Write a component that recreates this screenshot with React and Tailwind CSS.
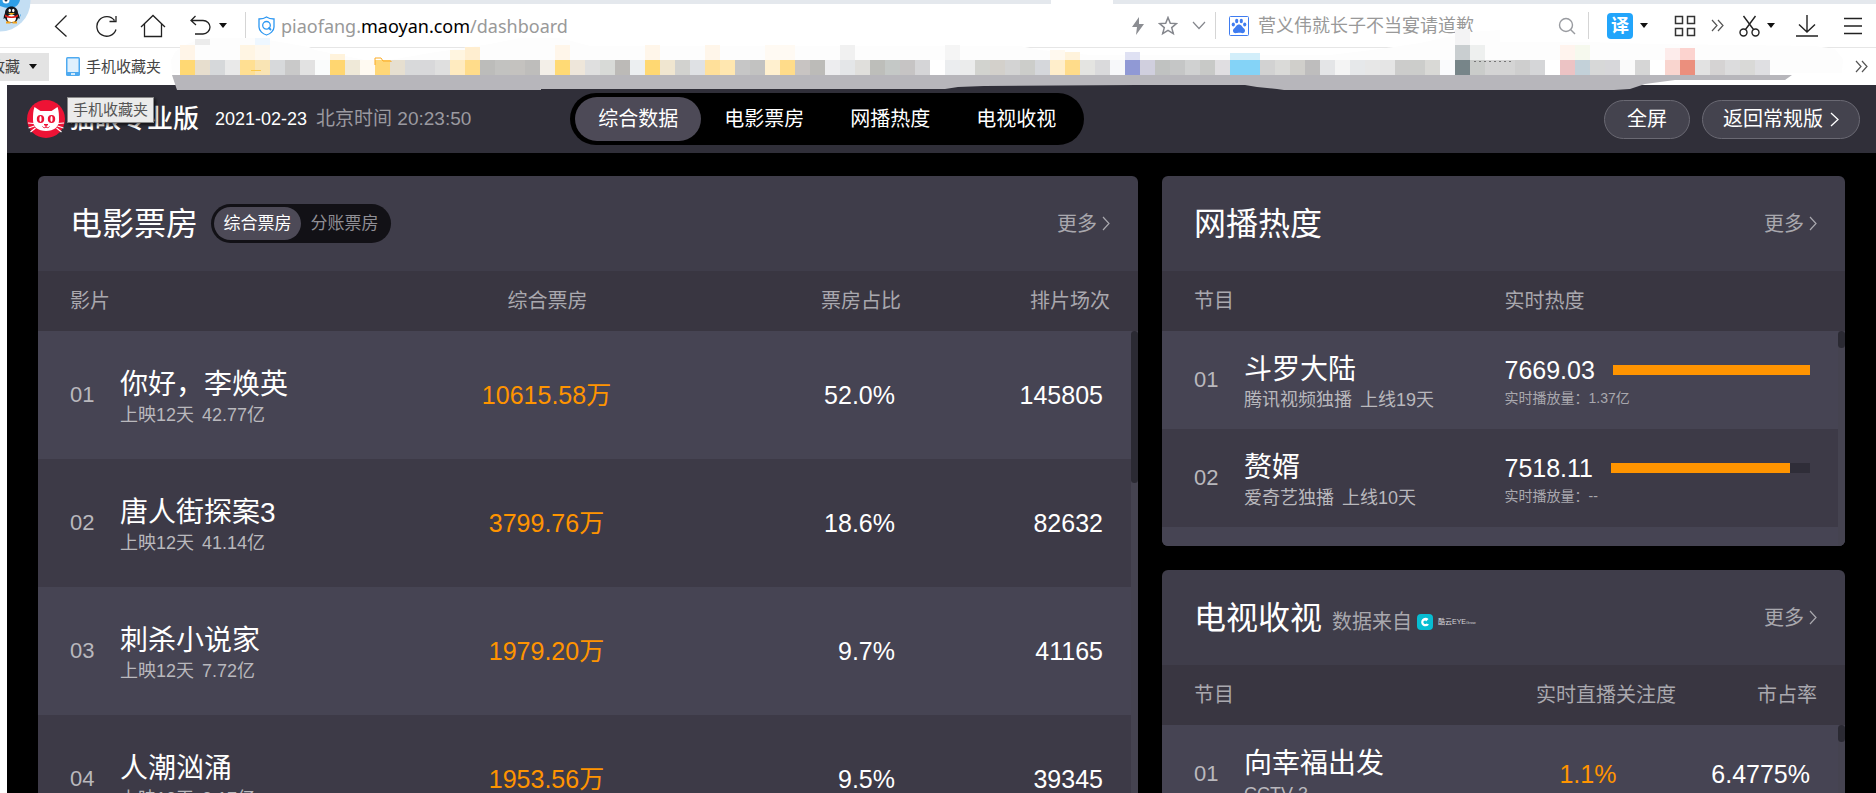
import { useState } from "react";

const films = [
  { rank: "01", name: "你好，李焕英", days: "上映12天", total: "42.77亿", box: "10615.58万", share: "52.0%", shows: "145805" },
  { rank: "02", name: "唐人街探案3", days: "上映12天", total: "41.14亿", box: "3799.76万", share: "18.6%", shows: "82632" },
  { rank: "03", name: "刺杀小说家", days: "上映12天", total: "7.72亿", box: "1979.20万", share: "9.7%", shows: "41165" },
  { rank: "04", name: "人潮汹涌", days: "上映12天", total: "3.17亿", box: "1953.56万", share: "9.5%", shows: "39345" },
];

const webShows = [
  { rank: "01", name: "斗罗大陆", source: "腾讯视频独播", days: "上线19天", heat: "7669.03", plays: "1.37亿", percent: 100 },
  { rank: "02", name: "赘婿", source: "爱奇艺独播", days: "上线10天", heat: "7518.11", plays: "--", percent: 90 },
];

const tvShows = [
  { rank: "01", name: "向幸福出发", channel: "CCTV-3", focus: "1.1%", market: "6.4775%" },
];

// Colours of the blurred bookmarks, one per 15px block
const mosaic =
  "ffd873 e7dece d6d8da e9e9e9 ffdf92 f9e4b4 d7d9db c9c9c9 e2e2e2 fafcfc ffd670 efe9d8 fffaf2 ffd777 e6dfd0 d8d9da d8d8da dfdfdf ffebc0 ffdc8a bcbcba c2c2c0 c4c2bf bebdbb f3efe8 ffda75 eee6da dfdfdf d8dad7 bcbab7 eceff1 ffd872 f0e6d0 d2d2cf dfe1e4 ffe09a ffe7b0 c6c6c6 c2c2c1 fff0cf ffdc8a c8c4c2 bcbbb8 ededef e4e6e8 e0dfdc bdbeba c4c8c6 c6c4c4 d5d5d7 ffffff ebedef ebecec d2d3cf d3d0cb d3d3d3 cccdca d5d7db ffeecb ffdc8a e4e4e1 dadadc f7f8fa 9099d5 d0cfde c0c2c1 c5c6c6 d0d1d1 c8c9c7 e0dee1 84d3f7 84d3f7 d2d2d2 dadad8 d0cfcb bebdbd e4e5e7 f4f4f4 e6e8ea e7e7e7 e5e5e5 cccccb cccdcb d9d9d6 fafbfd 778589 caccca d4d4d4 d4d4d4 cecece d5d6d8 ffffff ecc3c4 c3d1d9 d7d8d8 d7d7da fafafa d6d6d6 ffffff f9d5cf eb8f7d e2e2e2 d5d3d3 dcdcdd d9d9d7 dfdfe2".split(" ");

// [x, y, width, height, colour]
const mosaicTop = [
  [195, 39, 15, 6, "#ececec"], [255, 38, 15, 7, "#eef7ff"],
  [180, 45, 15, 15, "#fff5e8"], [240, 45, 15, 15, "#fff5e3"], [255, 45, 15, 15, "#fef8ee"],
  [330, 54, 15, 6, "#fff3dc"], [450, 50, 15, 10, "#fff5e0"], [465, 47, 15, 13, "#ffeed0"],
  [555, 45, 15, 15, "#fff6ea"], [645, 45, 15, 15, "#fff6ea"], [705, 45, 15, 15, "#fff6ea"],
  [765, 45, 30, 15, "#fffaf3"], [840, 45, 15, 15, "#f1f1f1"], [945, 45, 15, 15, "#f5f5f5"],
  [1050, 50, 15, 10, "#fff9ef"], [1065, 52, 15, 8, "#fff3dc"], [1125, 52, 15, 8, "#dfe1f3"],
  [1230, 53, 30, 7, "#d2eefa"], [1455, 29, 15, 16, "#f3f3f4"], [1455, 45, 15, 15, "#c9ced0"],
  [1470, 45, 15, 15, "#eef0ef"], [1560, 45, 15, 15, "#fff4ee"], [1575, 45, 15, 15, "#f6f9ee"],
  [1665, 48, 15, 12, "#fdeceb"], [1680, 48, 15, 12, "#fcd3cf"],
];

function Mosaic() {
  return (
    <svg className="pointer-events-none absolute left-0 top-0 z-10" width="1876" height="92" viewBox="0 0 1876 92" aria-hidden="true">
      <path d="M171 60l4-8 8-6 14-6 12-2h45l20 3 35 6 6 3 30 6 20 4h25l40-7 60-9 30-6h40l30 8h430l20 4 50 5h240l50-6 40-6 50-11 30-2v12h90l60 2 165 2 20 3 8 10-1 14H172z" fill="#fdfdfd" />
      {mosaicTop.map(([x, y, w, h, fill]) => (
        <rect key={`${x}-${y}`} x={x} y={y} width={w} height={h} fill={fill} />
      ))}
      {mosaic.map((c, i) => (
        <rect key={i} x={180 + i * 15} y="60" width="15" height="15" fill={`#${c}`} shapeRendering="crispEdges" />
      ))}
      <path d="M375 65v-7h6l2 3h8v1" fill="none" stroke="#fbab25" />
      <path d="M251 70.5h10" stroke="#fcc84a" />
      <path d="M1474 61.5h38" stroke="#777" strokeDasharray="2 3" />
      <path d="M172 75l5 15h364v-1h404l13-2 26-1 152-1h109l12 2 20 2 7 1h330l16-1 15-5 30-4h110l7-5z" fill="#b7b6bb" />
    </svg>
  );
}

function Caret() {
  return (
    <svg className="shrink-0" width="8" height="5" viewBox="0 0 8 5" aria-hidden="true">
      <path d="M0 0h8L4 5z" fill="#111" />
    </svg>
  );
}

function DoubleChevron() {
  return (
    <svg width="13" height="13" viewBox="0 0 13 13" fill="none" stroke="#555" strokeWidth="1.2" aria-hidden="true">
      <path d="M1 1l5 5.500L1 12M7 1l5 5.500L7 12" />
    </svg>
  );
}

function Avatar() {
  return (
    <svg className="absolute left-0 top-0 z-20" width="32" height="32" viewBox="0 0 32 32" aria-hidden="true">
      <circle cx="0" cy="1" r="30.500" fill="#c3def3" />
      <path d="M0 0h20c-1 5-5 8-10 8-4 0-7-1-10-2z" fill="#2f9fe6" />
      <circle cx="6" cy="0" r="3.500" fill="#fff" />
      <circle cx="6" cy="0" r="1.500" fill="#16324a" />
      <path d="M20 15l1-1-.5 3z" fill="#3f9fe0" />
      <ellipse cx="11.500" cy="17.500" rx="6.500" ry="5.500" fill="#f8f8f8" />
      <path d="M5 13c0-4 3-6.500 6.500-6.500S18 9 18 13c1 2 2 4 1.500 6l-1.500-1c-.5 3-3 5-6.500 5S6 21 5 18l-1.500 1c0-2 .5-4 1.500-6z" fill="#15171b" />
      <ellipse cx="11.500" cy="18.500" rx="4.500" ry="4" fill="#fff" />
      <ellipse cx="9.700" cy="10.500" rx="1.200" ry="1.700" fill="#fff" />
      <ellipse cx="13.300" cy="10.500" rx="1.200" ry="1.700" fill="#fff" />
      <path d="M8 13h7l-3.500 2z" fill="#f6b21b" />
      <path d="M5 14.500c4 2.500 9 2.500 13 0v2c-4 2-9 2-13 0z" fill="#e0201b" />
      <path d="M6 22.500h4.500M12.500 22.500H17" stroke="#f6a41b" strokeWidth="1.800" />
    </svg>
  );
}

function Toolbar() {
  return (
    <div className="flex h-11 items-center border-b border-[#e6e6e6] bg-white pl-[54px] pr-[14px]">
      <button type="button" aria-label="后退">
        <svg width="14" height="24" viewBox="0 0 14 24" fill="none" stroke="#222" strokeWidth="1.300"><path d="M12.500 1.500L1.500 12.500l11 10" /></svg>
      </button>
      <button type="button" aria-label="刷新" className="ml-7">
        <svg width="22" height="24" viewBox="0 0 22 24" fill="none" stroke="#222" strokeWidth="1.300"><path d="M20 15.500A9.800 9.800 0 1 1 18.500 6.500M13.500 7.500h6.500V2" /></svg>
      </button>
      <button type="button" aria-label="主页" className="ml-[22px]">
        <svg width="26" height="24" viewBox="0 0 26 24" fill="none" stroke="#222" strokeWidth="1.300"><path d="M1 13L13 1.500 25 13M4.500 10v12.500h17V10" /></svg>
      </button>
      <button type="button" aria-label="恢复" className="ml-6 flex items-center gap-2">
        <svg width="21" height="22" viewBox="0 0 21 22" fill="none" stroke="#222" strokeWidth="1.300"><path d="M5.500 1L1 5.500l5 4.500M1 5.500h12c4 0 7 3 7 6.500s-3 7-7 7H5" /></svg>
        <Caret />
      </button>
      <span className="ml-[18px] h-[27px] w-px bg-[#d5d5d5]" />
      <svg className="ml-3 shrink-0" width="17" height="20" viewBox="0 0 17 20" fill="none" stroke="#2c97f2" strokeWidth="1.300" aria-hidden="true">
        <path d="M8.500 1C6 2.800 3.500 3 1 3v8c0 4 4 7 7.500 8 3.500-1 7.500-4 7.500-8V3c-2.500 0-5-.2-7.500-2z" />
        <circle cx="8.500" cy="9.300" r="3.800" />
        <path d="M10.500 11.500l2.500 2.500" strokeWidth="1.800" />
      </svg>
      <div role="textbox" aria-label="地址" contentEditable suppressContentEditableWarning className="ml-[6px] flex-1 font-['Noto_Sans'] text-[18px] leading-7 text-[#999] outline-none">
        piaofang.<span className="text-black">maoyan.com</span>/dashboard
      </div>
      <button type="button" aria-label="极速模式">
        <svg width="12" height="18" viewBox="0 0 12 18"><path d="M7 0L0 10h5L4 18l8-11H7z" fill="#8b8d92" /></svg>
      </button>
      <button type="button" aria-label="收藏网页" className="ml-[14px]">
        <svg width="20" height="20" viewBox="0 0 20 20" fill="none" stroke="#85878d" strokeWidth="1.500"><path d="M10 1.500l2.300 5.700 6.200.4-4.800 4 1.600 6L10 14.300l-5.300 3.300 1.600-6-4.800-4 6.200-.4z" /></svg>
      </button>
      <button type="button" aria-label="展开地址栏" className="ml-[14px]">
        <svg width="14" height="9" viewBox="0 0 14 9" fill="none" stroke="#85878d" strokeWidth="1.200"><path d="M1 1l6 6.500L13 1" /></svg>
      </button>
      <span className="ml-[9px] h-[27px] w-px bg-[#d5d5d5]" />
      <svg className="ml-[13px] shrink-0" width="20" height="20" viewBox="0 0 20 20" aria-hidden="true">
        <rect x=".5" y=".5" width="19" height="19" rx="1" fill="#fff" stroke="#3f7cf0" />
        <g fill="#3f7cf0">
          <ellipse cx="4.300" cy="8.500" rx="1.600" ry="2.100" />
          <ellipse cx="7.700" cy="5" rx="1.600" ry="2.200" />
          <ellipse cx="12.300" cy="5" rx="1.600" ry="2.200" />
          <ellipse cx="15.700" cy="8.500" rx="1.600" ry="2.100" />
          <path d="M10 8.500c2.500 0 3 2.500 5 4 2 2 .8 4.700-1.500 4.700-1.300 0-2-.4-3.500-.4s-2.200.4-3.500.4C4.200 17.200 3 14.500 5 12.500c2-1.500 2.500-4 5-4z" />
        </g>
      </svg>
      <input type="text" aria-label="搜索" defaultValue="菅义伟就长子不当宴请道歉" className="ml-[9px] w-[300px] text-[18px] leading-7 text-[#999] outline-none" />
      <button type="button" aria-label="搜索按钮">
        <svg width="18" height="18" viewBox="0 0 18 18" fill="none" stroke="#999ba0" strokeWidth="1.400"><circle cx="8" cy="8" r="6.500" /><path d="M12.500 12.500L17 17" /></svg>
      </button>
      <span className="ml-3 h-[27px] w-px bg-[#d5d5d5]" />
      <button type="button" aria-label="翻译" className="ml-[18px] flex items-center gap-[7px]">
        <span className="flex size-[26px] items-center justify-center rounded-sm bg-[#22a5fb] text-[18px] font-bold leading-6 text-white">译</span>
        <Caret />
      </button>
      <button type="button" aria-label="应用" className="ml-[26px]">
        <svg width="22" height="22" viewBox="0 0 22 22" fill="none" stroke="#333" strokeWidth="1.500"><path d="M1.500 1.500h7v7h-7zM13.500 1.500h7v7h-7zM1.500 13.500h7v7h-7zM13.500 13.500h7v7h-7z" /></svg>
      </button>
      <button type="button" aria-label="更多扩展" className="ml-[15px]"><DoubleChevron /></button>
      <button type="button" aria-label="截图" className="ml-[15px] flex items-center gap-[7px]">
        <svg width="21" height="22" viewBox="0 0 21 22" fill="none" stroke="#222" strokeWidth="1.400"><circle cx="4.500" cy="17.500" r="3.500" /><circle cx="16.500" cy="17.500" r="3.500" /><path d="M4.500 1L14.500 14.500M16.500 1L6.500 14.500" /></svg>
        <Caret />
      </button>
      <button type="button" aria-label="下载" className="ml-[20px]">
        <svg width="24" height="22" viewBox="0 0 24 22" fill="none" stroke="#222" strokeWidth="1.400"><path d="M12 0v17M4 9.500l8 7.500 8-7.500M1 21h22" /></svg>
      </button>
      <button type="button" aria-label="菜单" className="ml-[25px]">
        <svg width="18" height="18" viewBox="0 0 18 18" stroke="#222" strokeWidth="1.500"><path d="M0 1.500h18M0 9h18M0 16.500h18" /></svg>
      </button>
    </div>
  );
}

function Bookmarks() {
  return (
    <div className="flex h-[37px] items-center bg-white pr-2 text-[15px] leading-6 text-[#444]">
      <button type="button" className="flex h-7 w-[49px] items-center justify-end gap-[9px] overflow-hidden bg-[#e3e3e3] pr-3">
        <span className="shrink-0">收藏</span>
        <Caret />
      </button>
      <a href="#mobile" className="ml-[17px] flex items-center gap-[6px]">
        <svg width="14" height="19" viewBox="0 0 14 19" aria-hidden="true">
          <rect width="14" height="19" rx="1.500" fill="#4eaaf0" />
          <rect x="1.500" y="1.500" width="11" height="13.500" fill="#dff0fd" />
          <path d="M5 17h4" stroke="#fff" strokeWidth="1.500" />
        </svg>
        手机收藏夹
      </a>
      <button type="button" aria-label="更多书签" className="ml-auto"><DoubleChevron /></button>
    </div>
  );
}

function MaoyanLogo() {
  return (
    <svg width="38" height="38" viewBox="0 0 38 38" aria-hidden="true">
      <circle cx="19" cy="19" r="19" fill="#ee1335" />
      <path d="M7.500 7l6 4h11l6-4c1.500 4 1.500 8 1.500 13 0 7-5 11-13 11S6 27 6 20c0-5 0-9 1.500-13z" fill="#fff" />
      <ellipse cx="13.500" cy="19" rx="3.700" ry="4" fill="#ee1335" />
      <ellipse cx="24.500" cy="19" rx="3.700" ry="4" fill="#ee1335" />
      <ellipse cx="13.500" cy="19" rx="1.100" ry="3" fill="#fff" />
      <ellipse cx="24.500" cy="19" rx="1.100" ry="3" fill="#fff" />
      <path d="M17 24.500h4l-2 1.500zM19 26v1.500M15.500 26.500c1 1.500 2.500 1.500 3.500.5 1 1 2.500 1 3.500-.5" fill="none" stroke="#ee1335" />
      <path d="M1 23l6 .5M1.500 28l6-2M3.500 32l5-4M37 23l-6 .5M36.500 28l-6-2M34.500 32l-5-4" stroke="#fff" strokeWidth="1.200" />
    </svg>
  );
}

function PageHeader() {
  const [active, setActive] = useState("综合数据");
  return (
    <header className="flex h-[68px] items-center bg-[#302f39] pl-5 pr-4 text-white">
      <div className="relative flex items-center gap-1">
        <MaoyanLogo />
        <span className="text-[26px] font-medium leading-8">猫眼专业版</span>
        <span role="tooltip" className="absolute -top-[3px] left-10 whitespace-nowrap border border-[#888] bg-[#ebebeb] px-[5px] text-[15px] leading-6 text-[#555] shadow-[2px_2px_3px_rgba(0,0,0,0.6)]">
          手机收藏夹
        </span>
      </div>
      <time className="ml-4 whitespace-nowrap text-[18px] leading-7">2021-02-23</time>
      <span className="ml-[9px] whitespace-nowrap text-[19px] leading-7 text-[#9b9aa0]">北京时间 20:23:50</span>
      <nav className="ml-[99px] flex shrink-0 rounded-full bg-black px-[5px] py-1">
        {["综合数据", "电影票房", "网播热度", "电视收视"].map((item) => (
          <button
            key={item}
            type="button"
            onClick={() => setActive(item)}
            className={`h-11 w-[126px] rounded-full text-[20px] leading-7 ${active === item ? "bg-[#4d4a57]" : ""}`}
          >
            {item}
          </button>
        ))}
      </nav>
      <button type="button" className="ml-auto h-[39px] w-[86px] shrink-0 rounded-full border border-[#6a6973] bg-[#44434e] text-[20px] leading-7">全屏</button>
      <button type="button" className="ml-3 flex h-[39px] w-[158px] shrink-0 items-center justify-center gap-[7px] rounded-full border border-[#6a6973] bg-[#44434e] text-[20px] leading-7">
        返回常规版
        <svg width="9" height="15" viewBox="0 0 9 15" fill="none" stroke="#fff" strokeWidth="1.300" aria-hidden="true"><path d="M1 1l7 6.500L1 14" /></svg>
      </button>
    </header>
  );
}

function PanelHeader({ title, children }) {
  return (
    <div className="flex h-[95px] items-center pl-8 pr-7">
      <h2 className="text-[32px] leading-10 text-white">{title}</h2>
      {children}
      <a href="#more" className="ml-auto flex items-center gap-[5px] text-[20px] leading-7 text-[#a9a8ae]">
        更多
        <svg width="8" height="15" viewBox="0 0 8 15" fill="none" stroke="#a9a8ae" strokeWidth="1.200" aria-hidden="true"><path d="M1 1l6 6.500L1 14" /></svg>
      </a>
    </div>
  );
}

function Panel({ children }) {
  return <section className="overflow-hidden rounded-md bg-[#3f3d4a]">{children}</section>;
}

function Scrollbar({ thumb }) {
  return (
    <div className="absolute bottom-0 right-0 top-[60px] w-[7px] bg-[#454350]">
      <div className={`rounded-full bg-[#2b2a33] ${thumb}`} />
    </div>
  );
}

function NameCell({ rank, name, info }) {
  return (
    <td className="pl-8">
      <div className="flex items-center">
        <span className="w-[50px] shrink-0 text-[22px] leading-7 text-[#b9b8bd]">{rank}</span>
        <div className="pt-1">
          <div className="text-[28px] leading-9 text-white">{name}</div>
          <div className="flex gap-2 text-[18px] leading-6 text-[#b9b8bd]">
            {info.map((text) => <span key={text}>{text}</span>)}
          </div>
        </div>
      </div>
    </td>
  );
}

const tableClass = "w-full table-fixed border-collapse";
const headRow = "h-[60px] bg-[#393641] text-[20px] leading-7 text-[#a9a8ae]";
const stripe = "odd:bg-[#464453] even:bg-[#3d3a47]";

function BoxOffice() {
  const [mode, setMode] = useState("综合票房");
  return (
    <Panel>
      <PanelHeader title="电影票房">
        <div className="ml-[13px] flex rounded-full bg-[#121116] p-[3px]">
          {["综合票房", "分账票房"].map((item) => (
            <button
              key={item}
              type="button"
              onClick={() => setMode(item)}
              className={`h-[33px] w-[87px] rounded-full text-[17px] leading-6 ${mode === item ? "bg-[#4d4a57] text-white" : "text-[#8f8e94]"}`}
            >
              {item}
            </button>
          ))}
        </div>
      </PanelHeader>
      <div className="relative">
        <table className={tableClass}>
          <thead>
            <tr className={headRow}>
              <th className="w-[38%] pl-8 text-left font-normal">影片</th>
              <th className="w-[17%] pr-1 font-normal">综合票房</th>
              <th className="w-[24%] pr-[6px] text-right font-normal">票房占比</th>
              <th className="pr-7 text-right font-normal">排片场次</th>
            </tr>
          </thead>
          <tbody>
            {films.map((film) => (
              <tr key={film.rank} className={`h-32 ${stripe}`}>
                <NameCell rank={film.rank} name={film.name} info={[film.days, film.total]} />
                <td className="pr-[6px] text-center text-[25px] leading-9 text-[#ff9400]">{film.box}</td>
                <td className="pr-3 text-right text-[25px] leading-9 text-white">{film.share}</td>
                <td className="pr-[35px] text-right text-[25px] leading-9 text-white">{film.shows}</td>
              </tr>
            ))}
          </tbody>
        </table>
        <Scrollbar thumb="h-[152px]" />
      </div>
    </Panel>
  );
}

function WebHeat() {
  return (
    <Panel>
      <PanelHeader title="网播热度" />
      <div className="relative">
        <table className={tableClass}>
          <thead>
            <tr className={headRow}>
              <th className="w-1/2 pl-8 text-left font-normal">节目</th>
              <th className="pl-px text-left font-normal">实时热度</th>
            </tr>
          </thead>
          <tbody>
            {webShows.map((show) => (
              <tr key={show.rank} className={`h-[98px] ${stripe}`}>
                <NameCell rank={show.rank} name={show.name} info={[show.source, show.days]} />
                <td className="pl-px pr-[35px]">
                  <div className="flex items-center gap-[18px]">
                    <span className="text-[25px] leading-9 text-white">{show.heat}</span>
                    <div className="h-[10px] flex-1 bg-[#2f2d38]">
                      <div className="h-full bg-[#ff9400]" style={{ width: `${show.percent}%` }} />
                    </div>
                  </div>
                  <div className="text-[14px] leading-5 text-[#a9a8ae]">实时播放量：{show.plays}</div>
                </td>
              </tr>
            ))}
          </tbody>
        </table>
        <div className="h-[19px] bg-[#464453]" />
        <Scrollbar thumb="h-[17px]" />
      </div>
    </Panel>
  );
}

function TvRatings() {
  return (
    <Panel>
      <PanelHeader title="电视收视">
        <div className="ml-[10px] flex items-center gap-[5px] pt-2 text-[20px] leading-7 text-[#a9a8ae]">
          数据来自
          <svg width="16" height="16" viewBox="0 0 16 16" aria-hidden="true">
            <rect width="16" height="16" rx="4" fill="#07bdd2" />
            <path d="M11.500 5A4.300 4.300 0 1 0 12 10.500L9.500 9.500A1.800 1.800 0 1 1 8.500 6.500l.5 1z" fill="#fff" />
          </svg>
          <span className="flex items-end text-[7px] leading-3 text-[#d5d5d8]">酷云EYE<span className="text-[4px] leading-[10px]">Grow</span></span>
        </div>
      </PanelHeader>
      <div className="relative">
        <table className={tableClass}>
          <thead>
            <tr className={headRow}>
              <th className="w-1/2 pl-8 text-left font-normal">节目</th>
              <th className="w-[30%] font-normal">实时直播关注度</th>
              <th className="pr-7 text-right font-normal">市占率</th>
            </tr>
          </thead>
          <tbody>
            {tvShows.map((show) => (
              <tr key={show.rank} className={`h-[98px] ${stripe}`}>
                <NameCell rank={show.rank} name={show.name} info={[show.channel]} />
                <td className="pr-9 text-center text-[25px] leading-9 text-[#ff9400]">{show.focus}</td>
                <td className="pr-[35px] text-right text-[25px] leading-9 text-white">{show.market}</td>
              </tr>
            ))}
          </tbody>
        </table>
        <Scrollbar thumb="h-[17px]" />
      </div>
    </Panel>
  );
}

export default function App() {
  return (
    <div className="relative flex h-screen flex-col overflow-hidden bg-white font-['Liberation_Sans','Noto_Sans_CJK_SC',sans-serif]">
      <div className="h-1 shrink-0 bg-[#e4e8ed]">
        <div className="ml-[56%] h-full w-[62px] bg-white" />
      </div>
      <Toolbar />
      <Bookmarks />
      <Avatar />
      <Mosaic />
      <div className="ml-[7px] min-h-0 flex-1 overflow-hidden bg-black">
        <PageHeader />
        <main className="grid grid-cols-[1100fr_683fr] items-start gap-6 px-[31px] pt-[23px]">
          <BoxOffice />
          <div className="flex flex-col gap-6">
            <WebHeat />
            <TvRatings />
          </div>
        </main>
      </div>
    </div>
  );
}
